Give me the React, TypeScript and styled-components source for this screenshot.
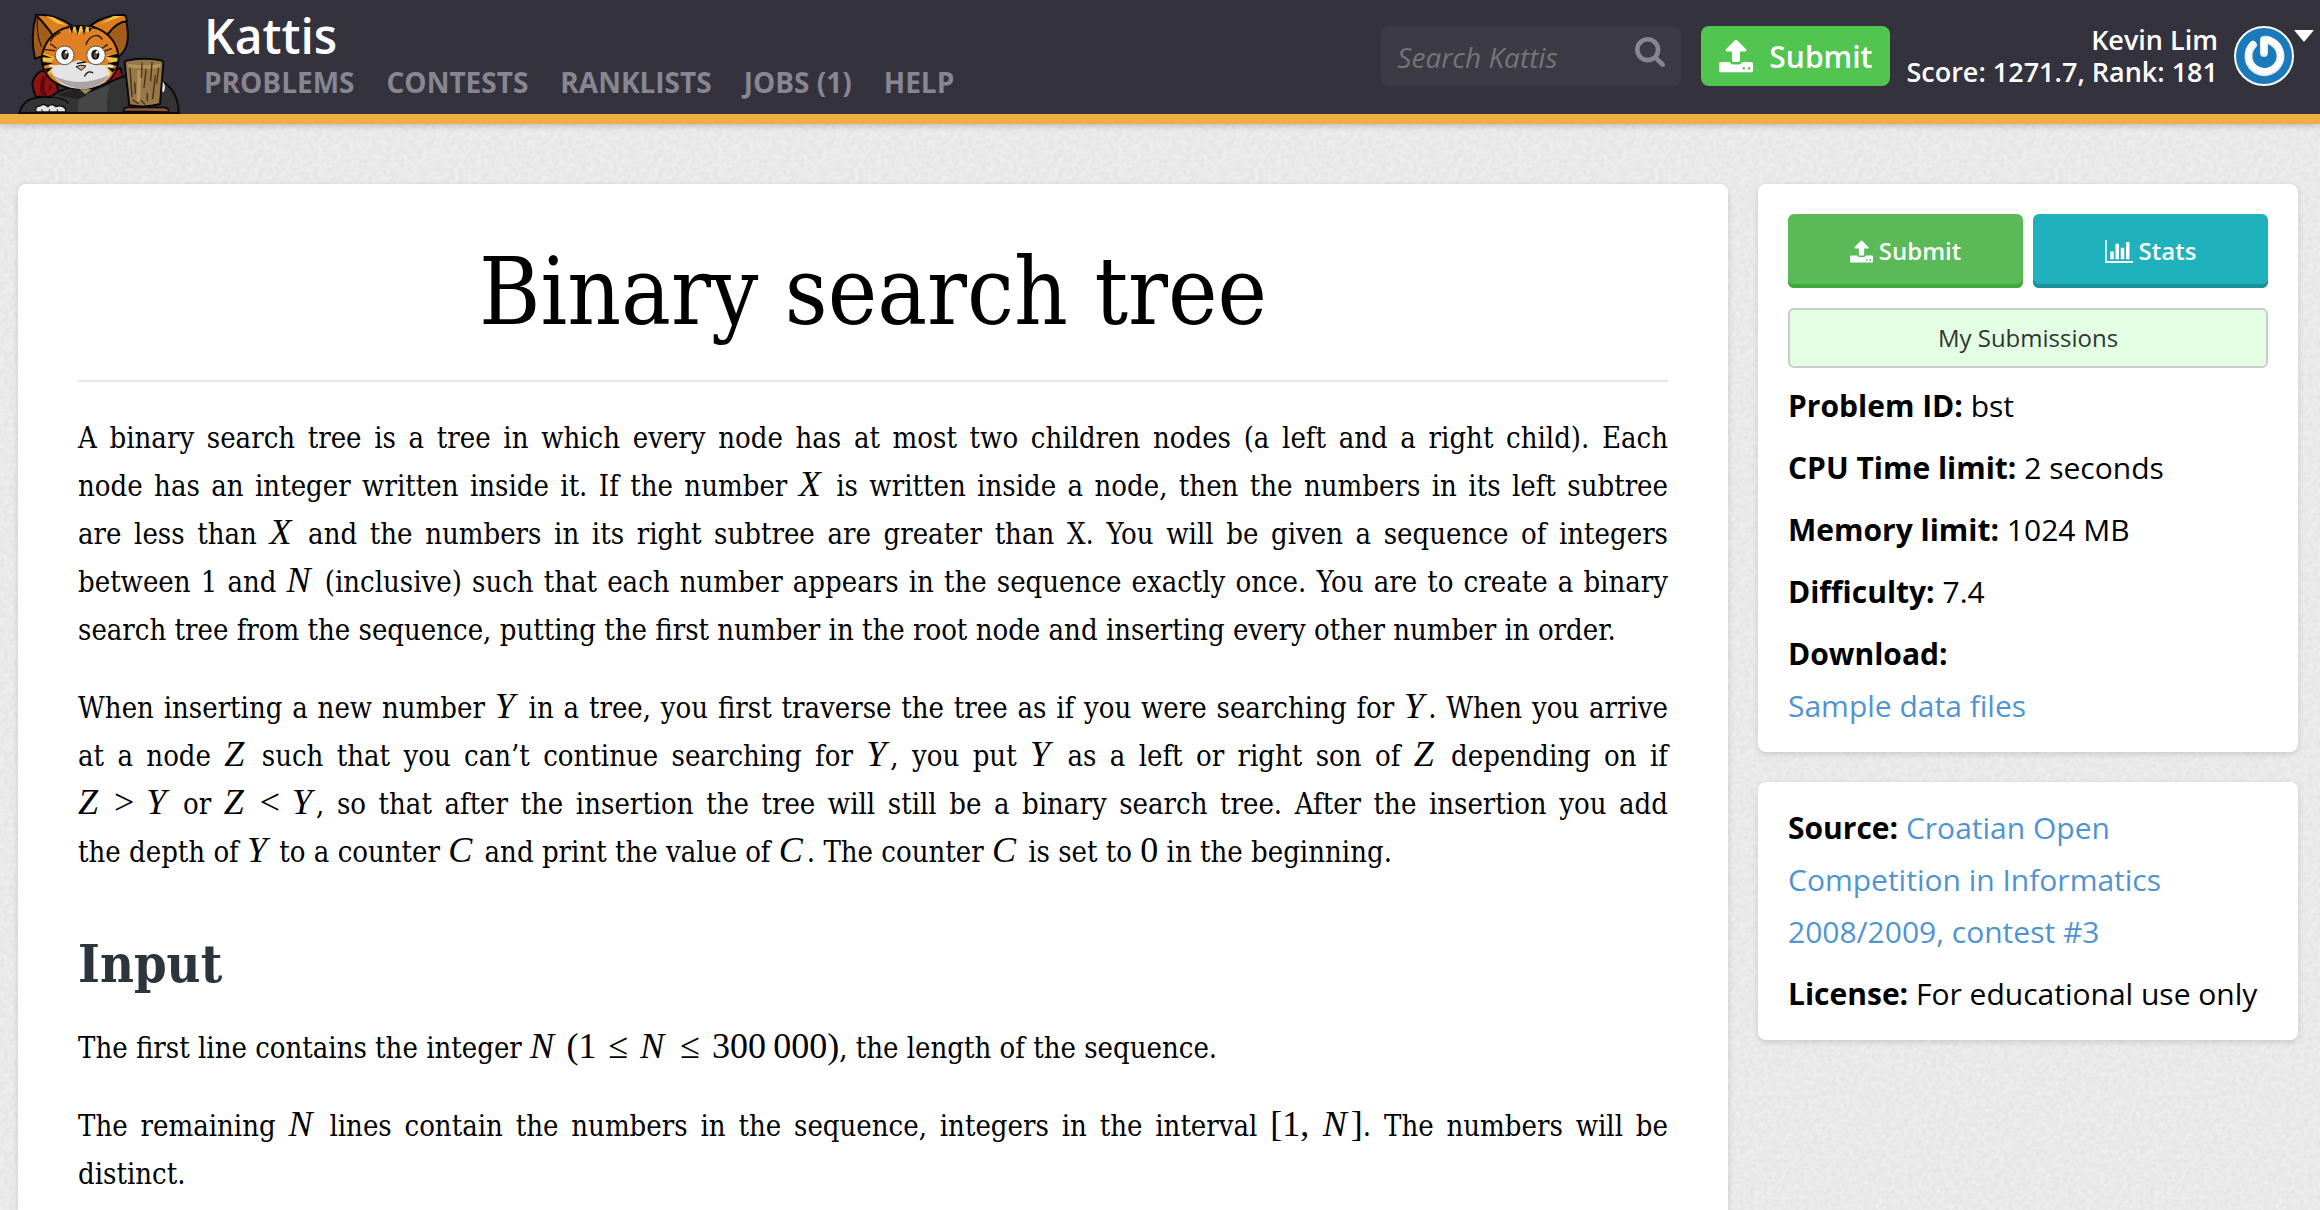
import React from "react";
import styled, { createGlobalStyle } from "styled-components";

const sans = `"Open Sans", "Noto Sans", sans-serif`;
const serif = `"DejaVu Serif Condensed", "DejaVu Serif", serif`;
const math = `"Liberation Serif", "Times New Roman", serif`;

const paper =
  "data:image/svg+xml," +
  encodeURIComponent(
    `<svg xmlns="http://www.w3.org/2000/svg" width="400" height="400"><filter id="n" x="0" y="0" width="100%" height="100%" color-interpolation-filters="sRGB"><feTurbulence type="fractalNoise" baseFrequency="0.22" numOctaves="3" stitchTiles="stitch"/><feColorMatrix values="0.07 0 0 0 0.88 0.07 0 0 0 0.88 0.07 0 0 0 0.88 0 0 0 0 1"/></filter><rect width="400" height="400" filter="url(#n)"/></svg>`
  );

const GlobalStyle = createGlobalStyle`
  *, *::before, *::after { box-sizing: border-box; }
  body {
    margin: 0;
    color: #000;
    background: #e9e9e9 url("${paper}");
    font-family: ${sans};
    font-size: 30px;
  }
  #root { min-height: 100vh; display: flex; flex-direction: column; }
  a { color: #4f94d2; text-decoration: none; }
  button, input { font: inherit; }
`;

const Header = styled.header`
  display: flex;
  align-items: stretch;
  height: 124px;
  padding-right: 6px;
  background: #34323d;
  border-bottom: 10px solid #efae43;
  box-shadow: 0 2px 6px rgba(0, 0, 0, 0.2);
`;

const LogoLink = styled.a`
  flex: none;
  width: 200px;
  margin-right: 4px;
  svg { display: block; }
`;

const Brand = styled.div`
  flex: 1;
  display: flex;
  flex-direction: column;
`;

const SiteName = styled.a`
  color: #fff;
  font-size: 48px;
  font-weight: 600;
  line-height: 60px;
  padding-top: 6px;
  align-self: flex-start;
`;

const Nav = styled.nav`
  display: flex;
  gap: 32px;
  line-height: 32px;
`;

const NavLink = styled.a`
  color: #888791;
  font-size: 28px;
  font-weight: 700;
  white-space: nowrap;
`;

const Tools = styled.div`
  display: flex;
  align-items: center;
  padding-bottom: 2px;
`;

const SearchForm = styled.form`
  display: flex;
  align-items: center;
  width: 300px;
  height: 60px;
  margin-right: 20px;
  padding: 0 16px;
  border-radius: 8px;
  background: #3c3a44;
`;

const SearchInput = styled.input`
  flex: 1;
  min-width: 0;
  height: 100%;
  padding: 2px 0 0;
  border: 0;
  outline: 0;
  background: none;
  color: #ddd;
  font-size: 28px;
  font-style: italic;
  &::placeholder { color: #757575; opacity: 1; }
`;

const SearchButton = styled.button`
  display: flex;
  padding: 0 0 8px;
  border: 0;
  background: none;
  color: #888791;
`;

const HeaderSubmit = styled.button`
  display: flex;
  align-items: center;
  gap: 16px;
  height: 60px;
  padding: 0 18px;
  border: 0;
  border-radius: 8px;
  background: #52c550;
  color: #fff;
  font-size: 30px;
  font-weight: 600;
`;

const User = styled.div`
  padding: 0 16px;
  color: #fff;
  font-size: 27px;
  font-weight: 600;
  line-height: 32px;
  text-align: right;
  white-space: nowrap;
`;

const MenuButton = styled.button`
  display: flex;
  align-items: flex-start;
  padding: 0;
  border: 0;
  background: none;
`;

const Caret = styled.span`
  margin-top: 4px;
  border: 10px solid transparent;
  border-top: 12px solid #fff;
  border-bottom: 0;
`;

const Page = styled.main`
  flex: 1;
  display: grid;
  grid-template-columns: minmax(0, 19fr) minmax(0, 6fr);
  gap: 30px;
  padding: 60px 22px 0 18px;
`;

const Card = styled.section`
  background: #fff;
  border-radius: 8px;
  box-shadow: 0 2px 6px rgba(0, 0, 0, 0.14);
`;

const Problem = styled(Card).attrs({ as: "article" })`
  padding: 64px 60px 0;
  border-radius: 8px 8px 0 0;
  font-family: ${serif};
  font-size: 29px;
  line-height: 48px;
`;

const Title = styled.h1`
  margin: 0 0 32px;
  padding-bottom: 44px;
  border-bottom: 2px solid #e5e5e5;
  font-size: 93px;
  font-weight: 400;
  line-height: 88px;
  text-align: center;
`;

const Text = styled.p`
  margin: 0 0 30px;
  text-align: justify;
`;

const Line = styled.span`
  display: block;
  text-align-last: justify;
  &:last-child { text-align-last: left; }
`;

const Heading = styled.h2`
  margin: 56px 0 28px;
  color: #2a363b;
  font-size: 52px;
  font-weight: 700;
  line-height: 64px;
`;

const Num = styled.span`
  font-family: ${math};
  font-size: 36px;
  line-height: 1;
  white-space: nowrap;
`;

const Var = styled.i`
  padding-right: 4px;
  font-family: ${math};
  font-size: 36px;
  line-height: 1;
`;

const Rel = styled.span`
  margin: 0 12px;
`;

const Side = styled.aside`
  display: flex;
  flex-direction: column;
  gap: 30px;
`;

const SideCard = styled(Card)`
  padding: 20px 30px 10px;
  line-height: 52px;
`;

const Row = styled.p`
  margin: 0 0 10px;
`;

const Actions = styled.div`
  display: grid;
  grid-template-columns: 1fr 1fr;
  gap: 10px;
  margin: 10px 0 20px;
`;

const Action = styled.button<{ $bg: string; $edge: string }>`
  display: flex;
  align-items: center;
  justify-content: center;
  gap: 6px;
  height: 74px;
  padding: 0;
  border: 0;
  border-radius: 6px;
  background: ${(p) => p.$bg};
  box-shadow: inset 0 -4px 0 ${(p) => p.$edge};
  color: #fff;
  font-size: 24px;
  font-weight: 600;
`;

const Mine = styled.button`
  display: block;
  width: 100%;
  height: 60px;
  margin-bottom: 12px;
  border: 2px solid #ccc;
  border-radius: 6px;
  background: #e2ffe3;
  color: #333;
  font-size: 24px;
`;

const UploadIcon = ({ size }: { size: number }) => (
  <svg width={size} height={size} viewBox="0 0 1664 1600" fill="currentColor" aria-hidden="true">
    <path d="M1280 1408q0-26-19-45t-45-19-45 19-19 45 19 45 45 19 45-19 19-45zm256 0q0-26-19-45t-45-19-45 19-19 45 19 45 45 19 45-19 19-45zm128-224v320q0 40-28 68t-68 28h-1472q-40 0-68-28t-28-68v-320q0-40 28-68t68-28h427q21 56 70.5 92t110.5 36h256q61 0 110.5-36t70.5-92h427q40 0 68 28t28 68zm-325-648q-17 40-59 40h-256v448q0 26-19 45t-45 19h-256q-26 0-45-19t-19-45v-448h-256q-42 0-59-40-17-39 14-69l448-448q18-19 45-19t45 19l448 448q31 30 14 69z" />
  </svg>
);

const SearchIcon = () => (
  <svg width="30" height="30" viewBox="0 128 1664 1664" fill="currentColor" aria-hidden="true">
    <path d="M1152 832q0-185-131.5-316.5t-316.5-131.5-316.5 131.5-131.5 316.5 131.5 316.5 316.5 131.5 316.5-131.5 131.5-316.5zm512 832q0 52-38 90t-90 38q-54 0-90-38l-343-342q-179 124-399 124-143 0-273.5-55.5t-225-150-150-225-55.5-273.5 55.5-273.5 150-225 225-150 273.5-55.5 273.5 55.5 225 150 150 225 55.5 273.5q0 220-124 399l343 343q37 37 37 90z" />
  </svg>
);

const ChartIcon = () => (
  <svg width="28" height="23" viewBox="0 0 2048 1536" preserveAspectRatio="none" fill="currentColor" aria-hidden="true">
    <path d="M640 768v512h-256v-512h256zm384-512v1024h-256v-1024h256zm1024 1152v128h-2048v-1536h128v1408h1920zm-640-896v768h-256v-768h256zm384-384v1152h-256v-1152h256z" />
  </svg>
);

const Avatar = () => (
  <svg width="60" height="60" viewBox="0 0 60 60" aria-hidden="true">
    <circle cx="30" cy="30" r="29" fill="#1a7abb" stroke="#fff" strokeWidth="2" />
    <g fill="none" strokeLinecap="round" strokeLinejoin="round" strokeWidth="8">
      <g stroke="#0d5f99" opacity="0.5" transform="translate(0 1)">
        <path d="M19 19A16 16 0 1 0 38 16Q34 13 30 14V27" />
      </g>
      <path stroke="#dfe6ea" d="M19 19A16 16 0 1 0 38 16Q34 13 30 14V27" />
      <path stroke="#fff" strokeWidth="6" d="M19 18A16 16 0 1 0 38 15Q34 13 30 14V26" />
    </g>
  </svg>
);

const CatLogo = () => (
  <svg width="200" height="114" viewBox="0 0 600 342" role="img" aria-label="Kattis">
    <g stroke="#0b0b0b" strokeWidth="6" strokeLinejoin="round" strokeLinecap="round">
      <path fill="#8d1414" d="M150 204L118 216Q98 232 97 254Q100 276 108 290L180 290L160 220ZM325 214L362 204L372 250L310 258Z" />
      <path fill="#343434" d="M58 345Q62 312 90 298Q120 288 150 292Q180 268 220 262L262 278L330 246Q370 222 430 226Q490 236 516 270Q538 302 536 345Z" />
      <path fill="none" strokeWidth="4" d="M150 292Q190 292 206 310" />
      <path fill="#a55c18" d="M105 176Q90 110 108 45Q160 42 212 76L150 160ZM272 76Q320 42 374 45Q390 100 380 135Q370 165 350 172Z" />
      <path fill="#dc7d1f" d="M108 45Q160 40 214 76L160 108Q140 78 108 45ZM272 76Q320 42 374 45Q382 56 380 64Q350 66 322 104Z" />
      <path fill="#e08026" d="M124 176Q134 110 190 86Q240 68 294 86Q350 112 356 172Q354 222 318 250Q280 270 236 268Q180 264 150 236Q126 210 124 176Z" />
      <path stroke="none" fill="#e4e4e4" d="M146 194Q190 200 234 180Q280 200 340 194Q334 234 300 254Q240 280 184 252Q154 230 146 194Z" />
      <path stroke="none" fill="#aaa5a5" d="M158 226Q236 266 326 226Q308 258 262 266Q198 270 158 226Z" />
    </g>
    <path fill="#f5c33f" d="M138 48L160 52L200 76L170 70ZM340 48L368 48L300 72ZM208 82L238 78L276 82L268 98L250 90L236 104L222 92L208 100ZM128 160L164 172L154 186L130 184ZM352 160L316 168L328 188L352 188ZM136 206L160 202L150 224ZM340 206L318 200L330 226Z" />
    <path fill="#0b0b0b" d="M208 82L216 102L220 80ZM226 78L233 106L240 78ZM246 78L252 106L258 80ZM266 82L268 98L276 84ZM124 162L158 174L126 172ZM126 186L160 190L130 198ZM134 206L158 202L142 218ZM356 160L318 170L354 174ZM354 184L322 190L350 198ZM346 206L322 202L338 218Z" />
    <g fill="none" stroke="#2a1707" strokeWidth="4" strokeLinecap="round">
      <path d="M258 134Q266 108 290 106Q302 108 306 118M152 124Q160 106 180 98M130 148L164 152M152 132L168 144M334 146L312 154M322 134L308 144" />
      <path stroke="#0b0b0b" d="M112 52Q108 100 124 140M368 66Q340 80 328 100" strokeWidth="3" />
    </g>
    <g fill="#fafafa" stroke="#555" strokeWidth="3">
      <circle cx="194" cy="166" r="28" />
      <circle cx="288" cy="166" r="28" />
    </g>
    <ellipse cx="195" cy="164" rx="11" ry="15" fill="#111" />
    <ellipse cx="286" cy="164" rx="12" ry="15" fill="#111" />
    <ellipse cx="195" cy="166" rx="5" ry="9" fill="#555" />
    <ellipse cx="286" cy="166" rx="5" ry="9" fill="#555" />
    <circle cx="199" cy="157" r="4" fill="#fff" />
    <circle cx="291" cy="157" r="4" fill="#fff" />
    <path d="M228 200Q242 192 258 198L244 211Z" fill="#d7a686" stroke="#111" strokeWidth="3" />
    <path d="M254 228Q264 210 278 218M232 190L256 186" fill="none" stroke="#111" strokeWidth="4" strokeLinecap="round" />
    <path fill="#474747" d="M236 296L262 280L330 256Q316 300 322 338H234Z" />
    <path fill="#222" d="M170 284L222 268L262 284L236 298Z" />
    <path fill="#a38b5f" d="M238 268H276L256 282Z" />
    <path fill="#5b0b0b" d="M128 228Q112 262 126 286H140Q126 260 140 230ZM148 250L156 262L146 276Z" />
    <path fill="#e7e7e7" stroke="#111" strokeWidth="4" d="M108 336Q104 318 120 318Q130 308 144 320Q154 308 168 320Q186 312 196 326L198 336Z" />
    <path stroke="#111" strokeWidth="3" d="M126 336V328M148 336V328M172 336V328" />
    <path fill="#ddd" d="M484 240Q502 254 492 276L480 274Z" />
    <path fill="#97774a" stroke="#0b0b0b" strokeWidth="6" strokeLinejoin="round" d="M374 188Q376 180 390 180Q430 172 478 180Q490 182 490 190L480 312Q440 324 388 316Z" />
    <path fill="#b4955e" d="M384 192Q430 200 482 192L480 204Q430 208 386 202ZM412 210L424 212L420 306L410 304Z" />
    <path fill="none" stroke="#463312" strokeWidth="4" strokeLinecap="round" d="M390 206L396 290M404 248L406 280M426 190L424 232M438 208L432 262M442 280V302M456 188L452 242M466 226L458 296M476 204L470 250M398 300L414 310M424 302L434 312" />
    <path fill="#8c5634" stroke="#0b0b0b" strokeWidth="5" d="M370 334Q370 322 386 322H492Q508 324 506 336Z" />
    <path stroke="#0b0b0b" strokeWidth="6" d="M54 339H538" />
  </svg>
);

const navItems = ["Problems", "Contests", "Ranklists", "Jobs (1)", "Help"];

export default function App() {
  return (
    <>
      <GlobalStyle />
      <Header>
        <LogoLink href="#home">
          <CatLogo />
        </LogoLink>
        <Brand>
          <SiteName href="#home">Kattis</SiteName>
          <Nav>
            {navItems.map((item) => (
              <NavLink key={item} href={"#" + item.split(" ")[0].toLowerCase()}>
                {item.toUpperCase()}
              </NavLink>
            ))}
          </Nav>
        </Brand>
        <Tools>
          <SearchForm role="search" onSubmit={(e) => e.preventDefault()}>
            <SearchInput type="text" aria-label="Search Kattis" placeholder="Search Kattis" />
            <SearchButton type="submit" aria-label="Search">
              <SearchIcon />
            </SearchButton>
          </SearchForm>
          <HeaderSubmit type="button">
            <UploadIcon size={34} />
            Submit
          </HeaderSubmit>
          <User>
            <div>Kevin Lim</div>
            <div>Score: 1271.7, Rank: 181</div>
          </User>
          <MenuButton type="button" aria-label="User menu">
            <Avatar />
            <Caret />
          </MenuButton>
        </Tools>
      </Header>
      <Page>
        <Problem>
          <Title>Binary search tree</Title>
          <Text>
            <Line>
              A binary search tree is a tree in which every node has at most two children nodes (a left and a right
              child). Each{" "}
            </Line>
            <Line>
              node has an integer written inside it. If the number <Var>X</Var> is written inside a node, then the
              numbers in its left subtree{" "}
            </Line>
            <Line>
              are less than <Var>X</Var> and the numbers in its right subtree are greater than X. You will be given a
              sequence of integers{" "}
            </Line>
            <Line>
              between 1 and <Var>N</Var> (inclusive) such that each number appears in the sequence exactly once. You
              are to create a binary{" "}
            </Line>
            <Line>
              search tree from the sequence, putting the first number in the root node and inserting every other
              number in order.
            </Line>
          </Text>
          <Text>
            <Line>
              When inserting a new number <Var>Y</Var> in a tree, you first traverse the tree as if you were
              searching for <Var>Y</Var>. When you arrive{" "}
            </Line>
            <Line>
              at a node <Var>Z</Var> such that you can’t continue searching for <Var>Y</Var>, you put <Var>Y</Var> as
              a left or right son of <Var>Z</Var> depending on if{" "}
            </Line>
            <Line>
              <Num><Var>Z</Var><Rel>&gt;</Rel><Var>Y</Var></Num> or{" "}
              <Num><Var>Z</Var><Rel>&lt;</Rel><Var>Y</Var></Num>, so that after the insertion the tree will still be
              a binary search tree. After the insertion you add{" "}
            </Line>
            <Line>
              the depth of <Var>Y</Var> to a counter <Var>C</Var> and print the value of <Var>C</Var>. The counter{" "}
              <Var>C</Var> is set to <Num>0</Num> in the beginning.
            </Line>
          </Text>
          <Heading>Input</Heading>
          <Text>
            The first line contains the integer <Var>N</Var>{" "}
            <Num>(1<Rel>≤</Rel><Var>N</Var><Rel>≤</Rel>300{"\u2009"}000)</Num>, the length of the sequence.
          </Text>
          <Text>
            <Line>
              The remaining <Var>N</Var> lines contain the numbers in the sequence, integers in the interval{" "}
              <Num>[1, <Var>N</Var>]</Num>. The numbers will be{" "}
            </Line>
            <Line>distinct.</Line>
          </Text>
        </Problem>
        <Side>
          <SideCard>
            <Actions>
              <Action type="button" $bg="#59ba57" $edge="#3fa93c">
                <UploadIcon size={23} />
                Submit
              </Action>
              <Action type="button" $bg="#1fb1bc" $edge="#1b919a">
                <ChartIcon />
                Stats
              </Action>
            </Actions>
            <Mine type="button">My Submissions</Mine>
            <Row><b>Problem ID:</b> bst</Row>
            <Row><b>CPU Time limit:</b> 2 seconds</Row>
            <Row><b>Memory limit:</b> 1024 MB</Row>
            <Row><b>Difficulty:</b> 7.4</Row>
            <Row>
              <b>Download:</b>
              <br />
              <a href="#samples">Sample data files</a>
            </Row>
          </SideCard>
          <SideCard>
            <Row>
              <b>Source:</b> <a href="#source">Croatian Open Competition in Informatics 2008/2009, contest #3</a>
            </Row>
            <Row><b>License:</b> For educational use only</Row>
          </SideCard>
        </Side>
      </Page>
    </>
  );
}
